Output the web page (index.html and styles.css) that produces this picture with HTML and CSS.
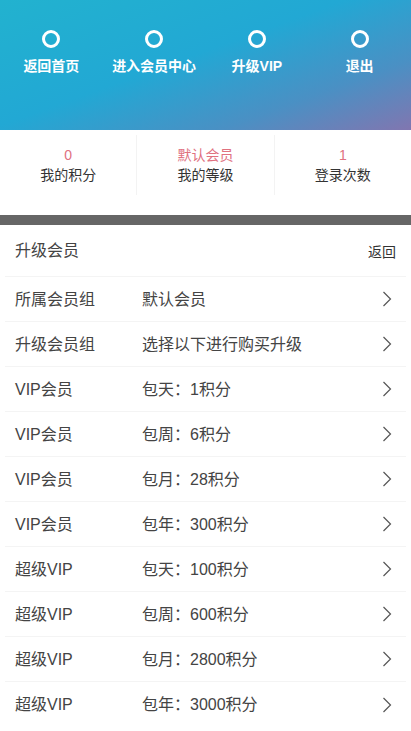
FILE: index.html
```html
<!DOCTYPE html>
<html lang="zh-CN">

<head>
    <meta charset="UTF-8">
    <meta name="viewport" content="width=device-width, initial-scale=1.0">
    <title>升级会员</title>
    <link rel="stylesheet" href="styles.css">
</head>

<body>
    <div class="top">
        <div class="nav">
            <a class="nav-item" href="#"><span class="ring"></span>返回首页</a>
            <a class="nav-item" href="#"><span class="ring"></span>进入会员中心</a>
            <a class="nav-item" href="#"><span class="ring"></span>升级VIP</a>
            <a class="nav-item" href="#"><span class="ring"></span>退出</a>
        </div>
    </div>

    <div class="stats">
        <div class="stat">
            <div class="num">0</div>
            <div class="label">我的积分</div>
        </div>
        <div class="stat">
            <div class="num">默认会员</div>
            <div class="label">我的等级</div>
        </div>
        <div class="stat">
            <div class="num">1</div>
            <div class="label">登录次数</div>
        </div>
    </div>

    <div class="gap"></div>

    <div class="list">
        <div class="list-head">
            <span>升级会员</span>
            <a class="back" href="#">返回</a>
        </div>
        <div class="row"><span class="name">所属会员组</span><span class="val">默认会员</span><svg class="arrow" viewBox="0 0 10 16"><polyline points="1.5,1 8.5,8 1.5,15" /></svg></div>
        <div class="row"><span class="name">升级会员组</span><span class="val">选择以下进行购买升级</span><svg class="arrow" viewBox="0 0 10 16"><polyline points="1.5,1 8.5,8 1.5,15" /></svg></div>
        <div class="row"><span class="name">VIP会员</span><span class="val">包天：1积分</span><svg class="arrow" viewBox="0 0 10 16"><polyline points="1.5,1 8.5,8 1.5,15" /></svg></div>
        <div class="row"><span class="name">VIP会员</span><span class="val">包周：6积分</span><svg class="arrow" viewBox="0 0 10 16"><polyline points="1.5,1 8.5,8 1.5,15" /></svg></div>
        <div class="row"><span class="name">VIP会员</span><span class="val">包月：28积分</span><svg class="arrow" viewBox="0 0 10 16"><polyline points="1.5,1 8.5,8 1.5,15" /></svg></div>
        <div class="row"><span class="name">VIP会员</span><span class="val">包年：300积分</span><svg class="arrow" viewBox="0 0 10 16"><polyline points="1.5,1 8.5,8 1.5,15" /></svg></div>
        <div class="row"><span class="name">超级VIP</span><span class="val">包天：100积分</span><svg class="arrow" viewBox="0 0 10 16"><polyline points="1.5,1 8.5,8 1.5,15" /></svg></div>
        <div class="row"><span class="name">超级VIP</span><span class="val">包周：600积分</span><svg class="arrow" viewBox="0 0 10 16"><polyline points="1.5,1 8.5,8 1.5,15" /></svg></div>
        <div class="row"><span class="name">超级VIP</span><span class="val">包月：2800积分</span><svg class="arrow" viewBox="0 0 10 16"><polyline points="1.5,1 8.5,8 1.5,15" /></svg></div>
        <div class="row"><span class="name">超级VIP</span><span class="val">包年：3000积分</span><svg class="arrow" viewBox="0 0 10 16"><polyline points="1.5,1 8.5,8 1.5,15" /></svg></div>
    </div>
</body>

</html>
```

FILE: styles.css
```css
body {
    margin: 0;
    font-family: "Liberation Sans", "Noto Sans CJK SC", sans-serif;
    color: #333;
    background: #fff;
}

a {
    text-decoration: none;
}

.top {
    height: 130px;
    background: linear-gradient(160deg, #22b2cf 0%, #22a8d4 45%, #4a90c4 75%, #8176b0 100%);
}

.nav {
    display: flex;
    padding-top: 30px;
}

.nav-item {
    flex: 1;
    display: flex;
    flex-direction: column;
    align-items: center;
    color: #fff;
    font-size: 14px;
    font-weight: bold;
    line-height: 20px;
}

.ring {
    width: 12px;
    height: 12px;
    border: 3px solid #fff;
    border-radius: 50%;
    margin-bottom: 8px;
}

.stats {
    display: flex;
    height: 85px;
    padding-top: 5px;
    box-sizing: border-box;
}

.stat {
    flex: 1;
    height: 60px;
    text-align: center;
    border-left: 1px solid #f3f3f3;
    padding-top: 10px;
    box-sizing: border-box;
}

.stat:first-child {
    border-left: none;
}

.num {
    color: #e0717f;
    font-size: 14px;
    line-height: 20px;
}

.label {
    font-size: 14px;
    line-height: 20px;
    color: #333;
}

.gap {
    height: 10px;
    background: #666;
}

.list-head {
    display: flex;
    justify-content: space-between;
    align-items: center;
    height: 52px;
    margin: 0 5px;
    padding: 0 10px 3px;
    box-sizing: border-box;
    font-size: 16px;
    color: #444;
    border-bottom: 1px solid #f4f4f4;
}

.back {
    color: #333;
    font-size: 14px;
    margin-top: 4px;
}

.row {
    display: flex;
    align-items: center;
    height: 45px;
    margin: 0 5px;
    padding: 0 10px 3px;
    box-sizing: border-box;
    border-bottom: 1px solid #f4f4f4;
    font-size: 16px;
    color: #444;
}

.row:last-child {
    border-bottom: none;
}

.name {
    width: 127px;
}

.val {
    flex: 1;
}

.arrow {
    width: 10px;
    height: 16px;
    margin-right: 4px;
    margin-top: 3px;
    fill: none;
    stroke: #555;
    stroke-width: 1.2;
}
```
